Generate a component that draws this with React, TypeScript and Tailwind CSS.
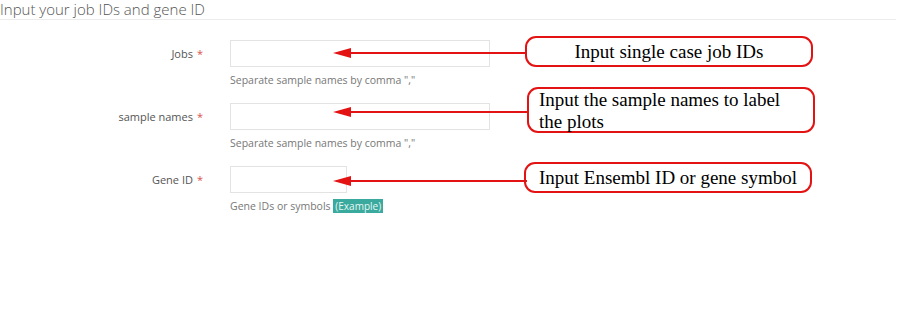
const RED = "#e31313";

interface RowProps {
  label: string;
  help: React.ReactNode;
  inputWidth: string;
  callout: React.ReactNode;
  calloutClass: string;
  arrowY: number;
}

function Arrow({ y }: { y: number }) {
  // drawn from the input (x=333) to the callout's left edge (x=525)
  return (
    <svg
      className="absolute left-[333px] top-0 pointer-events-none"
      width="194"
      height="40"
      viewBox="0 0 194 40"
      style={{ top: y - 20 }}
    >
      <line x1="16" y1="20" x2="194" y2="20" stroke={RED} strokeWidth="2" />
      <polygon points="0,20 18,15 18,25" fill={RED} />
    </svg>
  );
}

function FormRow({ label, help, inputWidth, callout, calloutClass, arrowY }: RowProps) {
  return (
    <div className="relative flex items-start">
      <div className="w-[230px] pr-[27px] text-right h-[27px] flex items-center justify-end pt-[2px] text-[11px] text-[#555]">
        {label}
        <span className="ml-[4px] text-[#d9534f]">*</span>
      </div>
      <div className="w-[295px]">
        <div className={`${inputWidth} h-[27px] border border-[#e3e3e3] bg-white`} />
        <div className="mt-[5px] text-[10.5px] leading-[16px] text-[#777]">{help}</div>
      </div>
      <div
        className={`w-[288px] border-2 border-[#e31313] rounded-[11px] bg-white text-[19px] leading-[22px] text-black ${calloutClass}`}
        style={{ fontFamily: '"Liberation Serif", "Times New Roman", serif' }}
      >
        {callout}
      </div>
      <Arrow y={arrowY} />
    </div>
  );
}

export default function App() {
  return (
    <div
      className="w-[900px] h-[331px] bg-white overflow-hidden"
      style={{ fontFamily: '"Open Sans", "Liberation Sans", sans-serif' }}
    >
      <div className="mr-[4px] border-b border-[#ececec] text-[15px] leading-[19px] font-light text-[#555]">
        Input your job IDs and gene ID
      </div>

      <div className="mt-[20px] flex flex-col gap-[15px]">
        <FormRow
          label="Jobs"
          inputWidth="w-[260px]"
          help={<>Separate sample names by comma &quot;,&quot;</>}
          callout="Input single case job IDs"
          calloutClass="-mt-[4px] h-[31px] flex items-center justify-center"
          arrowY={13}
        />
        <FormRow
          label="sample names"
          inputWidth="w-[260px]"
          help={<>Separate sample names by comma &quot;,&quot;</>}
          callout={<>Input the sample names to label<br />the plots</>}
          calloutClass="-mt-[16px] ml-[2px] h-[46px] pl-[10px]"
          arrowY={9}
        />
        <FormRow
          label="Gene ID"
          inputWidth="w-[117px]"
          help={
            <>
              Gene IDs or symbols{" "}
              <span className="inline-block bg-[#3aaa9e] text-[#e8f7f4] px-[2px] leading-[14px] text-[10px]">
                (Example)
              </span>
            </>
          }
          callout="Input Ensembl ID or gene symbol"
          calloutClass="-mt-[4px] -ml-[1px] h-[31px] flex items-center justify-center"
          arrowY={15}
        />
      </div>
    </div>
  );
}
